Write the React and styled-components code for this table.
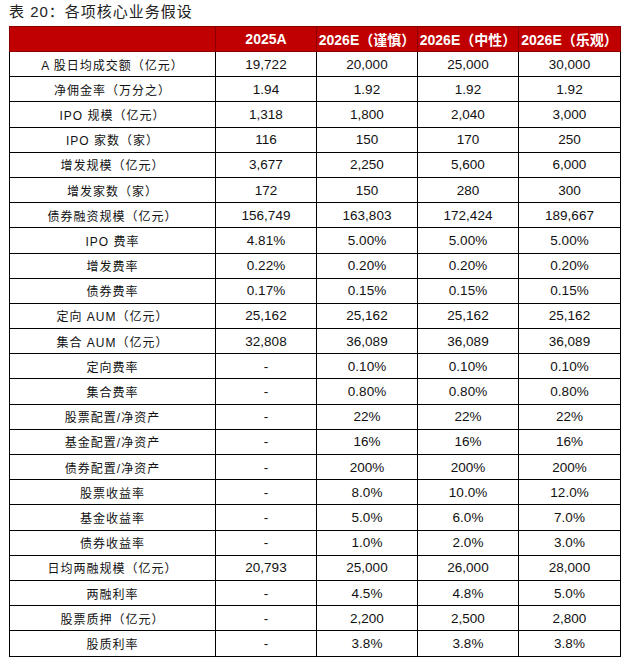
import React from "react";
import styled, { createGlobalStyle } from "styled-components";

const GlobalStyle = createGlobalStyle`
  body {
    margin: 0;
    background: #fff;
    font-family: "Liberation Sans", Arial, "Noto Sans CJK SC", sans-serif;
  }
`;

const Page = styled.div`
  padding: 0 6px 0 9px;
`;

const Title = styled.div`
  height: 26px;
  line-height: 24px;
  font-size: 15px;
  color: #222;
  letter-spacing: 1px;
  font-family: "Liberation Sans", "Noto Sans CJK SC", sans-serif;
`;

const Table = styled.table`
  width: 611px;
  border-collapse: collapse;
  table-layout: fixed;
`;

const HeadCell = styled.th`
  height: 24px;
  padding: 0;
  background: #c00000;
  color: #fff;
  font-size: 14px;
  font-weight: bold;
  text-align: center;
  border: 1px solid #8a0000;
  white-space: nowrap;
  font-family: "Liberation Sans", "Noto Sans CJK SC", sans-serif;
`;

const Row = styled.tr`
  height: 25.2px;
`;

const LabelCell = styled.td`
  padding: 0;
  border: 1px solid #000;
  text-align: center;
  font-size: 12px;
  letter-spacing: 1px;
  color: #111;
  white-space: nowrap;
  font-family: "Liberation Sans", "Noto Sans CJK SC", sans-serif;
`;

const Cell = styled.td`
  padding: 0;
  border: 1px solid #000;
  text-align: center;
  font-size: 13.5px;
  color: #111;
`;

const heads = ["", "2025A", "2026E（谨慎）", "2026E（中性）", "2026E（乐观）"];
const widths = [206, 101, 101, 101, 102];

const rows = [
  ["A 股日均成交额（亿元）", "19,722", "20,000", "25,000", "30,000"],
  ["净佣金率（万分之）", "1.94", "1.92", "1.92", "1.92"],
  ["IPO 规模（亿元）", "1,318", "1,800", "2,040", "3,000"],
  ["IPO 家数（家）", "116", "150", "170", "250"],
  ["增发规模（亿元）", "3,677", "2,250", "5,600", "6,000"],
  ["增发家数（家）", "172", "150", "280", "300"],
  ["债券融资规模（亿元）", "156,749", "163,803", "172,424", "189,667"],
  ["IPO 费率", "4.81%", "5.00%", "5.00%", "5.00%"],
  ["增发费率", "0.22%", "0.20%", "0.20%", "0.20%"],
  ["债券费率", "0.17%", "0.15%", "0.15%", "0.15%"],
  ["定向 AUM（亿元）", "25,162", "25,162", "25,162", "25,162"],
  ["集合 AUM（亿元）", "32,808", "36,089", "36,089", "36,089"],
  ["定向费率", "-", "0.10%", "0.10%", "0.10%"],
  ["集合费率", "-", "0.80%", "0.80%", "0.80%"],
  ["股票配置/净资产", "-", "22%", "22%", "22%"],
  ["基金配置/净资产", "-", "16%", "16%", "16%"],
  ["债券配置/净资产", "-", "200%", "200%", "200%"],
  ["股票收益率", "-", "8.0%", "10.0%", "12.0%"],
  ["基金收益率", "-", "5.0%", "6.0%", "7.0%"],
  ["债券收益率", "-", "1.0%", "2.0%", "3.0%"],
  ["日均两融规模（亿元）", "20,793", "25,000", "26,000", "28,000"],
  ["两融利率", "-", "4.5%", "4.8%", "5.0%"],
  ["股票质押（亿元）", "-", "2,200", "2,500", "2,800"],
  ["股质利率", "-", "3.8%", "3.8%", "3.8%"],
];

export default function App() {
  return (
    <>
      <GlobalStyle />
      <Page>
        <Title>表 20：各项核心业务假设</Title>
        <Table>
          <colgroup>
            {widths.map((w, i) => (
              <col key={i} style={{ width: w }} />
            ))}
          </colgroup>
          <thead>
            <tr>
              {heads.map((h, i) => (
                <HeadCell key={i}>{h}</HeadCell>
              ))}
            </tr>
          </thead>
          <tbody>
            {rows.map((r, i) => (
              <Row key={i}>
                <LabelCell>{r[0]}</LabelCell>
                {r.slice(1).map((v, j) => (
                  <Cell key={j}>{v}</Cell>
                ))}
              </Row>
            ))}
          </tbody>
        </Table>
      </Page>
    </>
  );
}
